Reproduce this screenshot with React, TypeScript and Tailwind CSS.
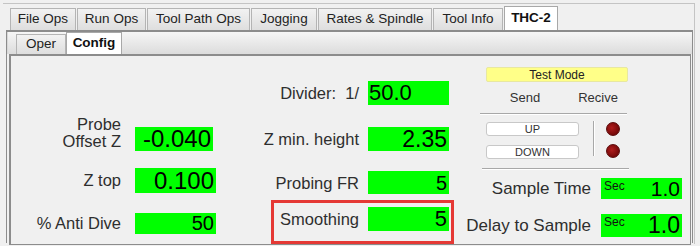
const tabs = [
  { t: "File Ops", w: "w-[66px]" },
  { t: "Run Ops", w: "w-[69px]" },
  { t: "Tool Path Ops", w: "w-[103px]" },
  { t: "Jogging", w: "w-[66px]" },
  { t: "Rates & Spindle", w: "w-[114px]" },
  { t: "Tool Info", w: "w-[70px]" },
];

function Field({
  w,
  h,
  size,
  value,
  left,
  sec,
}: {
  w: string;
  h: string;
  size: string;
  value: string;
  left?: boolean;
  sec?: boolean;
}) {
  return (
    <div
      className={`${w} ${h} ${size} bg-[#00ff00] text-black flex items-center leading-none relative ${
        left ? "justify-start pl-[1px]" : "justify-end pr-[2px]"
      }`}
    >
      {sec && (
        <span className="absolute left-[3px] top-[2px] text-[12px] text-[#111]">Sec</span>
      )}
      {value}
    </div>
  );
}

export default function App() {
  return (
    <div className="w-[700px] h-[246px] bg-[#f0f0f0] font-['Liberation_Sans',Arial,sans-serif] text-[#2e2e2e] overflow-hidden">
      <div className="ml-[3px] mt-[3px] w-[692px] h-[241px] border-t border-r border-[#c4c4c4]">
        {/* Top tabs */}
        <div className="flex items-end h-[26px] pl-[7px]">
          {tabs.map(({ t, w }) => (
            <div
              key={t}
              className={`${w} h-[22px] mr-[1px] flex items-center justify-center text-[13.5px] text-[#222] border border-b-0 border-[#b4b4b4] bg-linear-to-b from-[#f2f2f2] to-[#dedede]`}
            >
              {t}
            </div>
          ))}
          <div className="w-[54px] h-[24px] flex items-center justify-center text-[13.5px] font-bold text-[#111] border border-b-0 border-[#a8a8a8] bg-white">
            THC-2
          </div>
        </div>

        {/* Tab panel */}
        <div className="ml-[3px] w-[687px] h-[213px] border-t-2 border-l border-r border-[#8c8c8c] flex flex-col">
          {/* Sub tabs */}
          <div className="h-[23px] flex items-end pl-[8px] border-l border-[#d8d8d8] bg-linear-to-b from-[#f6f6f6] to-[#dcdcdc]">
            <div className="h-[20px] w-[50px] flex items-center justify-center text-[13.5px] text-[#222] border border-b-0 border-[#b4b4b4] bg-linear-to-b from-[#f2f2f2] to-[#dedede]">
              Oper
            </div>
            <div className="h-[22px] w-[56px] flex items-center justify-center text-[13.5px] font-bold text-[#111] border border-b-0 border-[#a8a8a8] bg-white">
              Config
            </div>
          </div>

          {/* Content */}
          <div className="flex-1 ml-[2px] mr-[1px] border-t-2 border-l-2 border-r border-b border-[#8c8c8c] flex">
            {/* Left column */}
            <div className="w-[210px] flex flex-col pt-[60px]">
              <div className="flex items-end">
                <div className="w-[110px] text-right text-[16.5px] leading-[17px] pb-[1px]">
                  Probe
                  <br />
                  Offset Z
                </div>
                <div className="ml-[14px]">
                  <Field w="w-[78px]" h="h-[24px]" size="text-[24px]" value="-0.040" />
                </div>
              </div>
              <div className="flex items-center mt-[17px]">
                <div className="w-[110px] text-right text-[16.5px]">Z top</div>
                <div className="ml-[14px]">
                  <Field w="w-[81px]" h="h-[25px]" size="text-[24px]" value="0.100" />
                </div>
              </div>
              <div className="flex items-center mt-[18px]">
                <div className="w-[110px] text-right text-[16.5px]">% Anti Dive</div>
                <div className="ml-[14px]">
                  <Field w="w-[81px]" h="h-[21px]" size="text-[20px]" value="50" />
                </div>
              </div>
            </div>

            {/* Middle column */}
            <div className="w-[238px] flex flex-col pt-[25px]">
              <div className="flex items-center">
                <div className="w-[138px] text-right text-[16.5px]">Divider:&nbsp; 1/</div>
                <div className="ml-[9px]">
                  <Field w="w-[81px]" h="h-[24px]" size="text-[22px]" value="50.0" left />
                </div>
              </div>
              <div className="flex items-center mt-[21px]">
                <div className="w-[138px] text-right text-[16.5px]">Z min. height</div>
                <div className="ml-[9px]">
                  <Field w="w-[81px]" h="h-[24px]" size="text-[23px]" value="2.35" />
                </div>
              </div>
              <div className="flex items-center mt-[19px]">
                <div className="w-[138px] text-right text-[16.5px]">Probing FR</div>
                <div className="ml-[9px]">
                  <Field w="w-[81px]" h="h-[23px]" size="text-[20px]" value="5" />
                </div>
              </div>
              <div className="ml-[50px] mt-[5px] w-[183px] h-[44px] border-[3px] border-[#e53935] flex items-start pt-[4px]">
                <div className="w-[85px] h-[24px] flex items-center justify-end text-[16.5px]">
                  Smoothing
                </div>
                <div className="ml-[9px]">
                  <Field w="w-[81px]" h="h-[24px]" size="text-[22px]" value="5" />
                </div>
              </div>
            </div>

            {/* Right column */}
            <div className="flex-1 flex flex-col pt-[11px]">
              <div className="ml-[27px] w-[142px] h-[15px] bg-[#ffff88] border border-[#e8e8a0] rounded-[2px] flex items-center justify-center text-[12px] text-[#222]">
                Test Mode
              </div>
              <div className="flex mt-[6px] h-[15px] text-[13px] text-[#333]">
                <div className="w-[132px] text-center">Send</div>
                <div className="w-[14px] flex justify-center">
                  <span className="whitespace-nowrap">Recive</span>
                </div>
              </div>
              <div className="ml-[21px] mt-[10px] w-[147px] h-[2px] border-t border-[#a8a8a8] border-b border-b-white" />
              <div className="flex mt-[6px]">
                <div className="ml-[27px] flex flex-col gap-[9px] pt-[1px]">
                  <div className="w-[93px] h-[14px] bg-white border border-[#c8c8c8] rounded-[3px] flex items-center justify-center text-[11px] text-[#333]">
                    UP
                  </div>
                  <div className="w-[93px] h-[14px] bg-white border border-[#c8c8c8] rounded-[3px] flex items-center justify-center text-[11px] text-[#333]">
                    DOWN
                  </div>
                </div>
                <div className="ml-[14px] w-[2px] h-[35px] border-l border-[#a8a8a8] border-r border-r-white" />
                <div className="ml-[11px] flex flex-col gap-[8px] pt-[1px]">
                  <div className="w-[14px] h-[14px] rounded-full border border-[#5a0a0a] bg-[radial-gradient(circle_at_40%_40%,#b01c1c,#5c0000)]" />
                  <div className="w-[14px] h-[14px] rounded-full border border-[#5a0a0a] bg-[radial-gradient(circle_at_40%_40%,#b01c1c,#5c0000)]" />
                </div>
              </div>
              <div className="ml-[23px] mt-[9px] w-[147px] h-[2px] border-t border-[#a8a8a8] border-b border-b-white" />
              <div className="flex items-center mt-[6px]">
                <div className="w-[132px] text-right text-[17px]">Sample Time</div>
                <div className="ml-[10px]">
                  <Field w="w-[81px]" h="h-[21px]" size="text-[21px]" value="1.0" sec />
                </div>
              </div>
              <div className="flex items-center mt-[11px]">
                <div className="w-[132px] text-right text-[17px] whitespace-nowrap">Delay to Sample</div>
                <div className="ml-[10px]">
                  <Field w="w-[81px]" h="h-[23px]" size="text-[23px]" value="1.0" sec />
                </div>
              </div>
            </div>
          </div>
        </div>
      </div>
    </div>
  );
}
